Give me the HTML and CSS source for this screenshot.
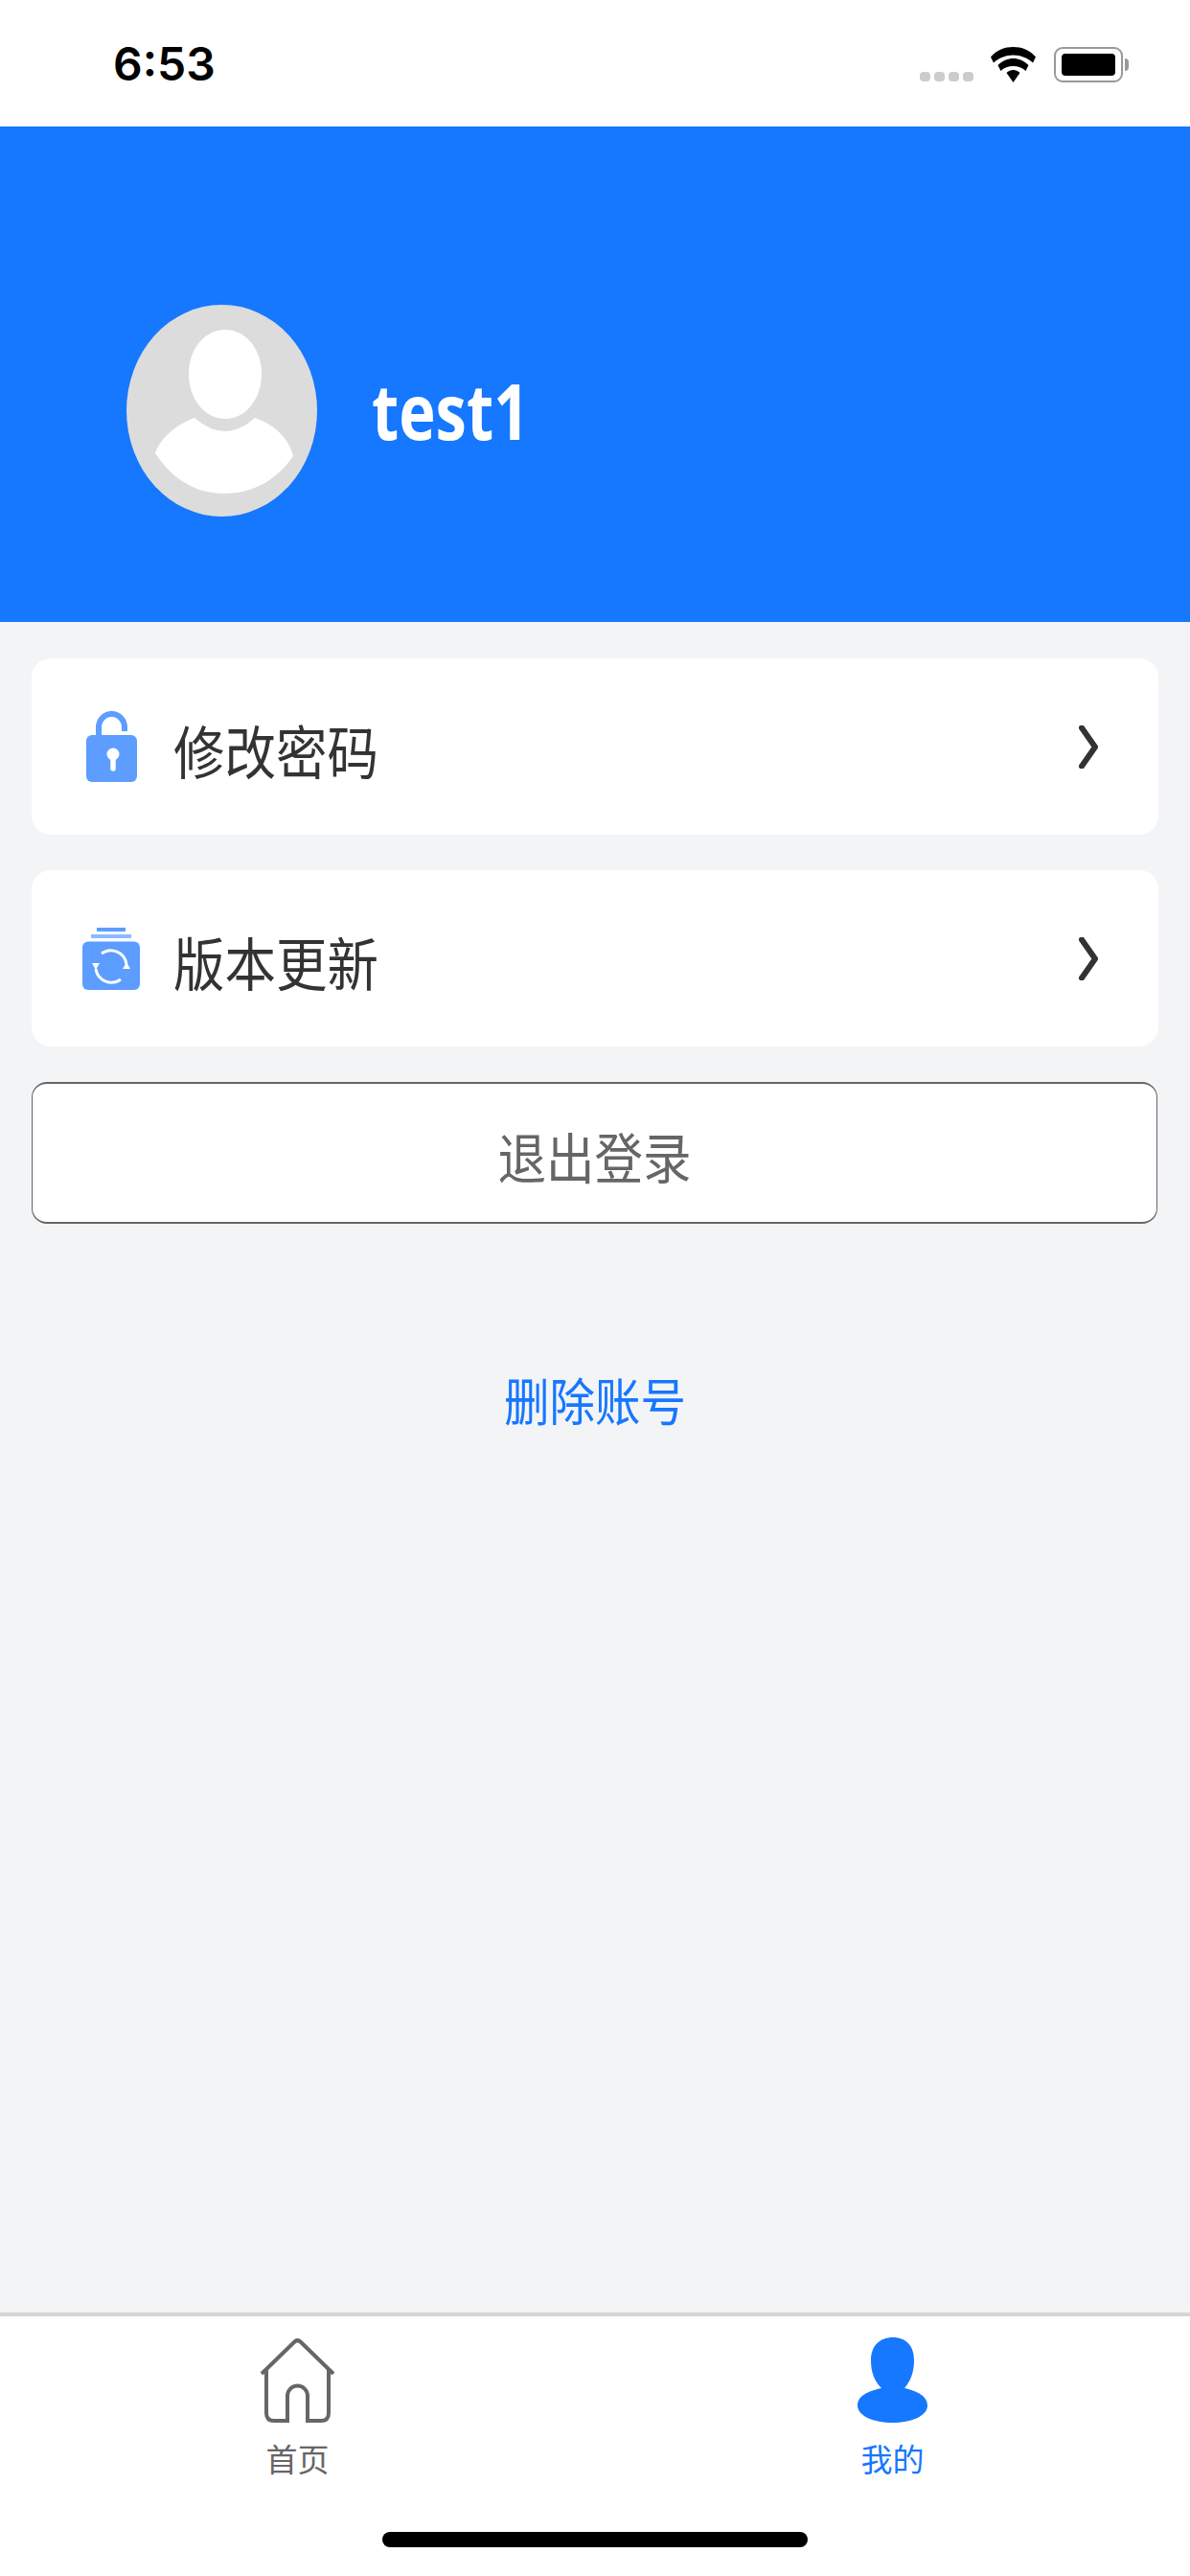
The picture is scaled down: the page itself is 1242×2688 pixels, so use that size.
FILE: index.html
```html
<!DOCTYPE html>
<html lang="zh-CN">

<head>
    <meta charset="UTF-8">
    <meta name="viewport" content="width=device-width, initial-scale=1.0">
    <title>我的</title>
    <link rel="stylesheet" href="styles.css">
</head>

<body>
    <div class="status-bar">
        <span class="time">6:53</span>
        <div class="status-icons">
            <div class="signal"><i></i><i></i><i></i><i></i></div>
            <svg class="wifi" width="47" height="37" viewBox="0 0 47 37">
                <path d="M23.5 0C32 0 41 3 47 10.500L44 16.500C39 11.500 31 8.500 23.500 8.500C16 8.500 8 11.500 3 16.500L0 10.500C6 3 15 0 23.500 0Z" />
                <path d="M23.500 12C29 12 35 14.500 39.500 19L36.500 25C33 21.500 28.500 20 23.500 20C18.500 20 14 21.500 10.500 25L7.500 19C12 14.500 18 12 23.500 12Z" />
                <path d="M23.500 24C26 24 28.500 25 30.500 27L23.500 37L16.500 27C18.500 25 21 24 23.500 24Z" />
            </svg>
            <div class="battery"><div class="battery-level"></div></div>
            <div class="battery-nub"></div>
        </div>
    </div>

    <header class="profile">
        <svg class="avatar" width="199" height="221" viewBox="0 0 199 221">
            <ellipse cx="99.500" cy="110.500" rx="99.500" ry="110.500" fill="#dcdcdc" />
            <path d="M103 26C124 26 141 46 141 72C141 99 124 119 103 119C82 119 65 99 65 72C65 46 82 26 103 26Z" fill="#fff" />
            <path d="M71 118Q103 146 134 118C155 125 170 140 174 158C155 185 130 197 102 197C75 197 50 185 30 155C35 140 50 126 71 118Z" fill="#fff" />
        </svg>
        <span class="username">test1</span>
    </header>

    <main class="content">
        <a class="menu-item">
            <span class="menu-icon">
                <svg width="53" height="74" viewBox="0 0 53 74">
                    <path d="M13 30V17A13.500 14 0 0 1 40 17V21" fill="none" stroke="#5c9dff" stroke-width="6" />
                    <rect y="25" width="53" height="49" rx="6" fill="#5c9dff" />
                    <circle cx="28" cy="45" r="6.500" fill="#fff" />
                    <path d="M28 46V60" stroke="#fff" stroke-width="5.500" stroke-linecap="round" />
                </svg>
            </span>
            <span class="menu-label"><span class="tall">修改密码</span></span>
            <svg class="chevron" width="20" height="45" viewBox="0 0 20 45">
                <path d="M3 2.500L17 22.500L3 42.500" fill="none" stroke="#333" stroke-width="6" stroke-linecap="round" stroke-linejoin="round" />
            </svg>
        </a>
        <a class="menu-item">
            <span class="menu-icon">
                <svg width="60" height="65" viewBox="0 0 60 65">
                    <rect x="15" width="30" height="4" fill="#5c9dff" />
                    <rect x="9" y="7" width="42" height="4" fill="#8cbaff" />
                    <rect y="14.500" width="60" height="50.500" rx="6" fill="#5c9dff" />
                    <path d="M20 27A16.500 16.500 0 0 1 46 38M40 54A16.500 16.500 0 0 1 14 43" fill="none" stroke="#fff" stroke-width="3" />
                    <path d="M10 37L14 44L18 37ZM42 43L46 36L50 43Z" fill="#fff" />
                </svg>
            </span>
            <span class="menu-label"><span class="tall">版本更新</span></span>
            <svg class="chevron" width="20" height="45" viewBox="0 0 20 45">
                <path d="M3 2.500L17 22.500L3 42.500" fill="none" stroke="#333" stroke-width="6" stroke-linecap="round" stroke-linejoin="round" />
            </svg>
        </a>
        <button class="logout"><span class="tall">退出登录</span></button>
        <div class="delete-account"><span class="tall">删除账号</span></div>
    </main>

    <nav class="tabbar">
        <div class="tabs">
            <a class="tab">
                <svg width="79" height="89" viewBox="0 0 79 89">
                    <path d="M2 38L36 5Q39.500 1.500 43 5L77 38M7 33V79Q7 87 15 87H29V61A10.500 10.500 0 0 1 50 61V87H64Q72 87 72 79V33" fill="none" stroke="#666" stroke-width="4" />
                </svg>
                <span class="tab-label">首页</span>
            </a>
            <a class="tab active">
                <svg width="73" height="89" viewBox="0 0 73 89">
                    <path d="M37 0C51 0 59 9 59 24C59 37 55 46 49 53C62 56 73 61 73 71C73 82 56 89 36.500 89C17 89 0 82 0 71C0 61 11 56 25 53C18 46 14 37 14 24C14 9 23 0 37 0Z" fill="#1677ff" />
                </svg>
                <span class="tab-label">我的</span>
            </a>
        </div>
        <div class="home-indicator"></div>
    </nav>
</body>

</html>
```

FILE: styles.css
```css
* {
    padding: 0;
    margin: 0;
    box-sizing: border-box;
}

body {
    display: flex;
    flex-direction: column;
    width: 1242px;
    height: 2688px;
    background-color: #f3f4f6;
    font-family: "Noto Sans CJK SC", "Noto Sans", sans-serif;
}

.tall {
    display: inline-block;
    transform: scaleY(1.12);
}

/* status bar */
.status-bar {
    display: flex;
    justify-content: space-between;
    align-items: center;
    height: 132px;
    padding: 2px 64px 0 118px;
    background-color: #fff;
}

.time {
    font-family: Inter, "Liberation Sans", sans-serif;
    font-size: 48px;
    font-weight: 600;
    line-height: 1;
    color: #000;
}

.status-icons {
    display: flex;
    align-items: center;
}

.signal {
    display: flex;
    gap: 4px;
    margin: 26px 18px 0 0;
}

.signal i {
    width: 11px;
    height: 10px;
    border-radius: 4px;
    background-color: #ccc;
}

.wifi {
    margin-right: 19px;
}

.battery {
    width: 72px;
    height: 37px;
    padding: 5px 6px;
    border: 2px solid #999;
    border-radius: 9px;
}

.battery-level {
    height: 100%;
    border-radius: 4px;
    background-color: #000;
}

.battery-nub {
    width: 4px;
    height: 13px;
    margin-left: 2px;
    border-radius: 0 4px 4px 0;
    background-color: #999;
}

/* header */
.profile {
    display: flex;
    align-items: center;
    gap: 57px;
    height: 517px;
    padding: 76px 0 0 132px;
    background-color: #1677ff;
}

.username {
    display: inline-block;
    font-family: "Open Sans", sans-serif;
    font-size: 65px;
    font-weight: 700;
    line-height: 1;
    color: #fff;
    transform: scaleY(1.24);
}

/* menu */
.content {
    flex: 1;
    padding: 38px 33px 0;
}

.menu-item {
    display: flex;
    align-items: center;
    height: 184px;
    margin-bottom: 37px;
    padding: 0 63px 0 53px;
    border-radius: 20px;
    background-color: #fff;
}

.menu-icon {
    display: flex;
    justify-content: center;
    width: 60px;
    margin-right: 35px;
}

.menu-label {
    flex: 1;
    padding-top: 7px;
    font-size: 53.500px;
    line-height: 1.2;
    color: #333;
}

.logout {
    display: block;
    width: 1175px;
    height: 148px;
    padding-top: 4px;
    border: solid #666;
    border-width: 2px 1px;
    border-radius: 16px;
    background-color: #fff;
    font-family: inherit;
    font-size: 50.500px;
    color: #666;
}

.delete-account {
    margin-top: 155px;
    text-align: center;
    font-size: 47.500px;
    line-height: 1.2;
    color: #1677ff;
}

/* tab bar */
.tabbar {
    height: 275px;
    padding-top: 22px;
    border-top: 4px solid #d5d5d5;
    background-color: #fff;
}

.tabs {
    display: flex;
}

.tab {
    display: flex;
    flex: 1;
    flex-direction: column;
    align-items: center;
    gap: 14px;
    color: #666;
}

.tab.active {
    color: #1677ff;
}

.tab svg {
    display: block;
}

.tab-label {
    font-size: 33px;
    line-height: 1.4;
}

.home-indicator {
    width: 444px;
    height: 16px;
    margin: 54px auto 0;
    border-radius: 8px;
    background-color: #000;
}
```
